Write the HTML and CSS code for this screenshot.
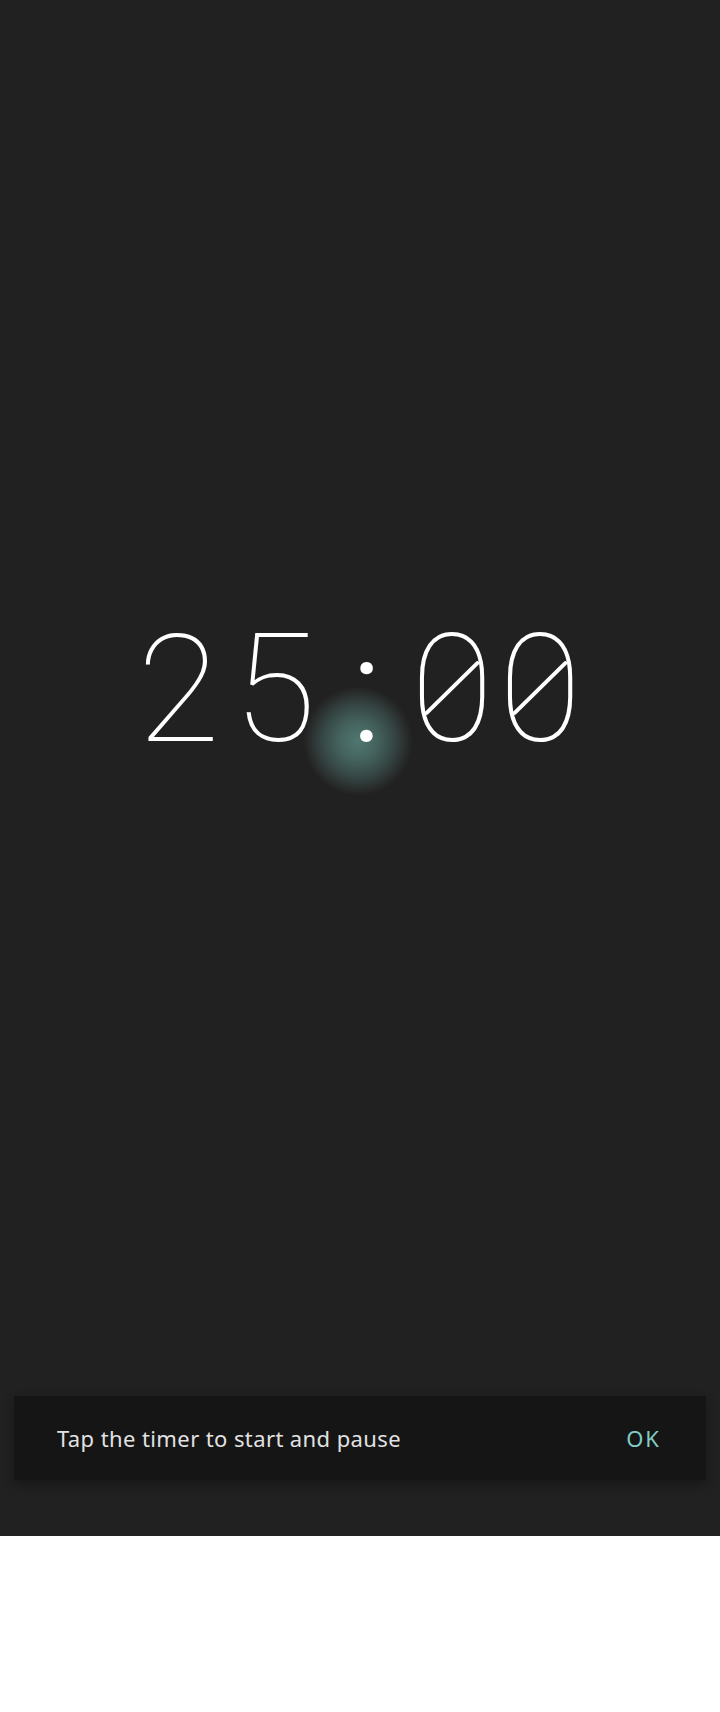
FILE: index.html
```html
<!DOCTYPE html>
<html lang="en">
<head>
<meta charset="utf-8">
<title>Timer</title>
<link rel="stylesheet" href="styles.css">
</head>
<body>
<main class="screen">
  <div class="timer-wrap">
    <span class="ripple"></span>
    <div class="timer" aria-label="25:00"><span class="ch c1">2</span><span class="ch c2">5</span><span class="ch c3">:</span><span class="ch c4 zero">0</span><span class="ch c5 zero">0</span></div>
  </div>
  <div class="snackbar">
    <span class="snack-text">Tap the timer to start and pause</span>
    <span class="snack-action">OK</span>
  </div>
</main>
</body>
</html>
```
FILE: styles.css
```css
html, body {
  margin: 0;
  padding: 0;
  background: #ffffff;
}
.screen {
  height: 1536px;
  background: #212121;
  display: flex;
  flex-direction: column;
  box-sizing: border-box;
  padding-top: 614px;
}
.timer-wrap {
  position: relative;
  display: flex;
  justify-content: flex-start;
  padding-left: 132px;
}
.timer {
  position: relative;
  z-index: 1;
  display: flex;
  font-family: Roboto, "Noto Sans", sans-serif;
  font-weight: 100;
  font-size: 151px;
  line-height: 151px;
  color: #ffffff;
}
.ch {
  display: block;
  text-align: center;
  position: relative;
}
.c1 { width: 93px; }
.c2 { width: 99px; }
.c3 { width: 85px; font-weight: 300; }
.c4 { width: 86px; }
.c5 { width: 90px; }
.zero::after {
  content: "";
  position: absolute;
  left: 50%;
  top: 74px;
  width: 75px;
  height: 4px;
  background: #ffffff;
  border-radius: 2px;
  transform: translate(-50%, -50%) rotate(-44.5deg);
}
.ripple {
  position: absolute;
  left: 304px;
  top: 73px;
  width: 108px;
  height: 108px;
  border-radius: 50%;
  background: radial-gradient(circle closest-side, #4f7771 0%, #45635e 35%, #364846 65%, #2a2f2e 88%, #222222 100%);
}
.snackbar {
  margin: auto 14px 56px;
  background: #151515;
  box-shadow: 0 4px 10px rgba(0, 0, 0, 0.35);
  display: flex;
  align-items: center;
  justify-content: space-between;
  padding: 28px 47px 28px 43px;
  line-height: 28px;
  font-family: "Noto Sans", "Open Sans", sans-serif;
  font-size: 22px;
}
.snack-text {
  color: #e2e2e2;
  letter-spacing: 0.4px;
}
.snack-action {
  color: #80cbc4;
  letter-spacing: 2px;
  margin-right: -2px;
}
```
